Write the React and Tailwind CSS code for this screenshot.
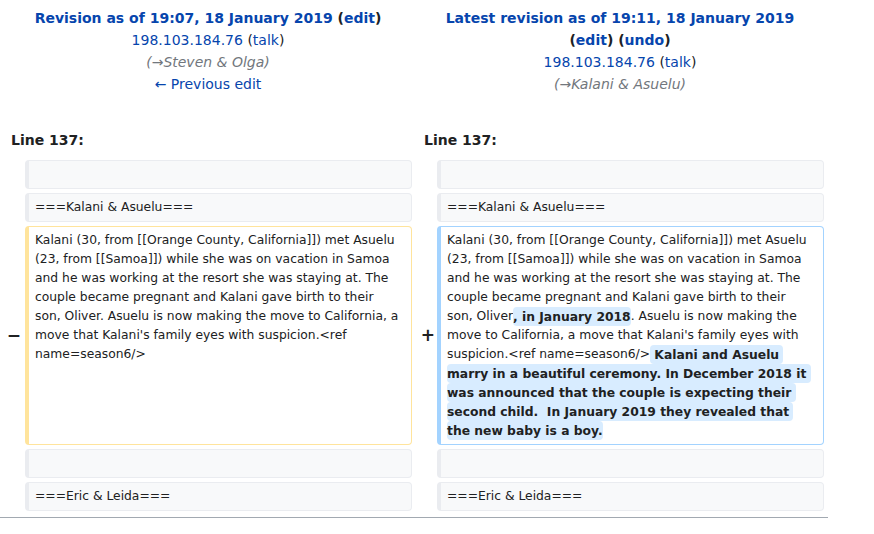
import React from 'react';

const link = 'text-[#0645ad]';

function ContextBox({ children }) {
  return (
    <div className="rounded-[4px] border border-[#eaecf0] border-l-4 bg-[#f8f9fa] pl-[6px] pr-[11px] py-[4px] leading-[19px] whitespace-pre-wrap">
      {children || '\u00a0'}
    </div>
  );
}

function Ins({ children }) {
  return (
    <span className="font-bold bg-[#d8ecff] rounded-[4px] py-[2.5px] [box-decoration-break:clone]">
      {children}
    </span>
  );
}

export default function App() {
  return (
    <div className="w-[874px] h-[534px] bg-white text-[#202122] font-['DejaVu_Sans',sans-serif]">
      <div className="w-[828px] grid grid-cols-[17px_387px_17px_387px] gap-x-[4px] gap-y-[4px] px-[4px]">
        {/* titles */}
        <div className="col-span-2 text-center text-[14px] leading-[22px] pt-[7px]">
          <div className="font-bold">
            <span className={link}>Revision as of 19:07, 18 January 2019</span> (
            <span className={link}>edit</span>)
          </div>
          <div>
            <span className={link}>198.103.184.76</span> (<span className={link}>talk</span>)
          </div>
          <div className="italic text-[#72777d]">(→Steven &amp; Olga)</div>
          <div className={link}>← Previous edit</div>
        </div>
        <div className="col-span-2 text-center text-[14px] leading-[22px] pt-[7px]">
          <div className="font-bold">
            <span className={link}>Latest revision as of 19:11, 18 January 2019</span>
          </div>
          <div className="font-bold">
            (<span className={link}>edit</span>) (<span className={link}>undo</span>)
          </div>
          <div>
            <span className={link}>198.103.184.76</span> (<span className={link}>talk</span>)
          </div>
          <div className="italic text-[#72777d]">(→Kalani &amp; Asuelu)</div>
        </div>

        {/* line numbers */}
        <div className="col-span-2 text-[14px] leading-[22px] font-bold pt-[30px] pb-[5px] pl-[7px]">Line 137:</div>
        <div className="col-span-2 text-[14px] leading-[22px] font-bold pt-[30px] pb-[5px] pl-[8px]">Line 137:</div>

        {/* rows */}
        <div />
        <div className="text-[12.32px]"><ContextBox /></div>
        <div />
        <div className="text-[12.32px]"><ContextBox /></div>

        <div />
        <div className="text-[12.32px]"><ContextBox>===Kalani &amp; Asuelu===</ContextBox></div>
        <div />
        <div className="text-[12.32px]"><ContextBox>===Kalani &amp; Asuelu===</ContextBox></div>

        <div className="flex items-center justify-end text-[17px] font-bold">−</div>
        <div className="text-[12.32px] rounded-[4px] border border-[#ffe49c] border-l-4 bg-white pl-[6px] pr-[11px] py-[4px] leading-[19px] whitespace-pre-wrap">
          {"Kalani (30, from [[Orange County, California]]) met Asuelu (23, from [[Samoa]]) while she was on vacation in Samoa and he was working at the resort she was staying at. The couple became pregnant and Kalani gave birth to their son, Oliver. Asuelu is now making the move to California, a move that Kalani's family eyes with suspicion.<ref name=season6/>"}
        </div>
        <div className="flex items-center justify-end text-[17px] font-bold -mr-[2px]">+</div>
        <div className="text-[12.32px] rounded-[4px] border border-[#a3d3ff] border-l-4 bg-white pl-[6px] pr-[11px] py-[4px] leading-[19px] whitespace-pre-wrap">
          {"Kalani (30, from [[Orange County, California]]) met Asuelu (23, from [[Samoa]]) while she was on vacation in Samoa and he was working at the resort she was staying at. The couple became pregnant and Kalani gave birth to their son, Oliver"}
          <Ins>{", in January 2018"}</Ins>
          {". Asuelu is now making the move to California, a move that Kalani's family eyes with suspicion.<ref name=season6/>"}
          <Ins>{" Kalani and Asuelu marry in a beautiful ceremony. In December 2018 it was announced that the couple is expecting their second child.  In January 2019 they revealed that the new baby is a boy."}</Ins>
        </div>

        <div />
        <div className="text-[12.32px]"><ContextBox /></div>
        <div />
        <div className="text-[12.32px]"><ContextBox /></div>

        <div />
        <div className="text-[12.32px]"><ContextBox>===Eric &amp; Leida===</ContextBox></div>
        <div />
        <div className="text-[12.32px]"><ContextBox>===Eric &amp; Leida===</ContextBox></div>
      </div>
      <div className="w-[828px] mt-[6px] border-t border-[#a2a9b1]" />
    </div>
  );
}
